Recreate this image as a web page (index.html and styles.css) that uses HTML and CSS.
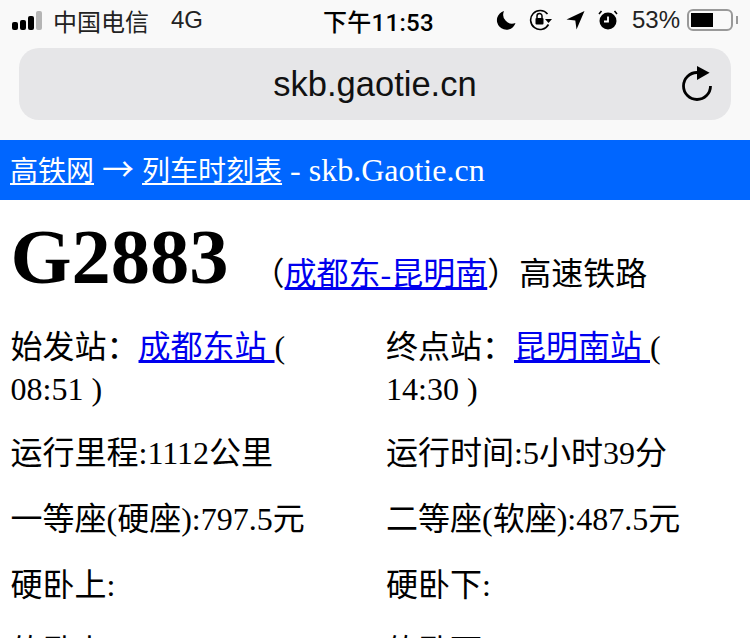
FILE: index.html
```html
<!DOCTYPE html>
<html lang="zh-CN">
<head>
<meta charset="utf-8">
<title>G2883</title>
<link rel="stylesheet" href="styles.css">
</head>
<body>
<header class="chrome">
  <div class="status">
    <div class="status-left">
      <span class="signal"><i></i><i></i><i></i><i class="off"></i></span>
      <span class="carrier">中国电信</span>
      <span class="net">4G</span>
    </div>
    <div class="clock">下午11:53</div>
    <div class="status-right">
      <svg width="20" height="20" viewBox="0 0 20 20"><path d="M8 1A9.500 9.500 0 1 0 19.500 13 A9 9 0 0 1 8 1Z" fill="#000"/></svg>
      <svg width="24" height="22" viewBox="0 0 24 22"><path d="M18.500 5A9.500 9.500 0 1 0 19.500 15.500" fill="none" stroke="#000" stroke-width="1.600"/><path d="M16 10h7l-3.500 4z" fill="#000"/><rect x="6.500" y="9" width="8" height="6.500" rx="1" fill="#000"/><path d="M8 9V7a2.500 2.500 0 0 1 5 0v2" fill="none" stroke="#000" stroke-width="1.500"/></svg>
      <svg width="19" height="20" viewBox="0 0 19 20"><path d="M18.500 1 .5 9.500l8.800 1 1.200 9z" fill="#000"/></svg>
      <svg width="20" height="20" viewBox="0 0 20 20"><circle cx="10" cy="11" r="8.500" fill="#000"/><path d="M10 6.500v5H6" fill="none" stroke="#fff" stroke-width="1.800"/><path d="M1 4l2.500-3M19 4l-2.500-3" stroke="#000" stroke-width="1.600"/></svg>
      <span class="pct">53%</span>
      <span class="battery"><span class="level"></span></span>
      <span class="nub"></span>
    </div>
  </div>
  <div class="urlbar">
    <span class="url">skb.gaotie.cn</span>
    <svg class="reload" width="32" height="38" viewBox="0 0 32 38"><path d="M16 6.500A13.500 13.500 0 1 0 29.500 20" fill="none" stroke="#000" stroke-width="2.800"/><path d="M16 0l12.600 6.700L16 14z" fill="#000"/></svg>
  </div>
</header>
<nav class="crumb"><a href="#">高铁网</a> <span class="arrow">→</span> <a href="#">列车时刻表</a> - skb.Gaotie.cn</nav>
<main class="content">
  <div class="title">
    <h1>G2883</h1>
    <span class="route">（<a href="#">成都东-昆明南</a>）高速铁路</span>
  </div>
  <div class="grid">
    <p class="first">始发站：<a href="#">成都东站 </a>( 08:51 )</p>
    <p class="first">终点站：<a href="#">昆明南站 </a>( 14:30 )</p>
    <p>运行里程:1112公里</p>
    <p>运行时间:5小时39分</p>
    <p>一等座(硬座):797.5元</p>
    <p>二等座(软座):487.5元</p>
    <p>硬卧上:</p>
    <p>硬卧下:</p>
    <p>软卧上:</p>
    <p>软卧下:</p>
  </div>
</main>
</body>
</html>
```
FILE: styles.css
```css
html, body { margin: 0; padding: 0; height: 638px; overflow: hidden; }
body {
  width: 750px;
  background: #fff;
  color: #000;
  font-family: "Liberation Serif", "Noto Sans CJK SC", serif;
}
.chrome { height: 140px; background: #f9f9f9; box-sizing: border-box; padding: 0 19px; }
.status {
  height: 40px;
  margin: 0 -19px 8px;
  padding: 0 12px;
  display: flex;
  align-items: center;
  font-family: "Liberation Sans", "Noto Sans CJK SC", sans-serif;
  font-size: 24px;
}
.status-left { display: flex; align-items: center; width: 311px; }
.signal { display: flex; align-items: flex-end; gap: 2px; height: 19px; margin-right: 11px; }
.signal i { width: 6px; background: #000; border-radius: 2px; height: 8px; }
.signal i:nth-child(2) { height: 10px; }
.signal i:nth-child(3) { height: 14px; }
.signal i:nth-child(4) { height: 19px; }
.signal .off { background: #b5b5b5; }
.carrier { color: #222; }
.net { margin-left: 22px; color: #222; }
.clock { font-family: Roboto, "Noto Sans CJK SC", sans-serif; font-weight: 500; letter-spacing: 0.3px; }
.status-right { flex: 1; display: flex; align-items: center; justify-content: flex-end; gap: 13px; color: #222; }
.pct { margin-left: 1px; }
.battery { width: 46px; height: 22px; margin-left: -6px; border: 2px solid #999; border-radius: 6px; box-sizing: border-box; padding: 2px; display: flex; }
.level { width: 22px; background: #000; }
.nub { width: 2px; height: 8px; background: #999; margin-left: -10px; }
.urlbar {
  height: 72px;
  background: #e6e6e8;
  border-radius: 20px;
  display: flex;
  align-items: center;
  justify-content: center;
  position: relative;
}
.url { font-family: "Liberation Sans", sans-serif; font-size: 34.5px; color: #111; }
.reload { position: absolute; right: 18px; top: 18px; }
.crumb {
  height: 60px;
  background: #0066ff;
  color: #fff;
  font-size: 32px;
  line-height: 54px;
  padding-left: 10px;
  white-space: nowrap;
}
.crumb a { color: #fff; font-size: 28px; }
.arrow { font-family: "Noto Sans CJK SC", sans-serif; }
.content { padding-left: 10.5px; }
.title { height: 126px; box-sizing: border-box; padding-top: 9px; white-space: nowrap; line-height: 96px; }
h1 { display: inline-block; margin: 0; font-size: 78.5px; line-height: 96px; font-weight: 700; }
.route { font-size: 32px; margin-left: 20px; vertical-align: -2px; }
.grid { display: grid; grid-template-columns: 375.5px 375.5px; row-gap: 24px; }
.grid p { margin: 0; font-size: 32px; line-height: 42px; max-width: 300px; }
.grid .first { margin-bottom: -2px; }
```
